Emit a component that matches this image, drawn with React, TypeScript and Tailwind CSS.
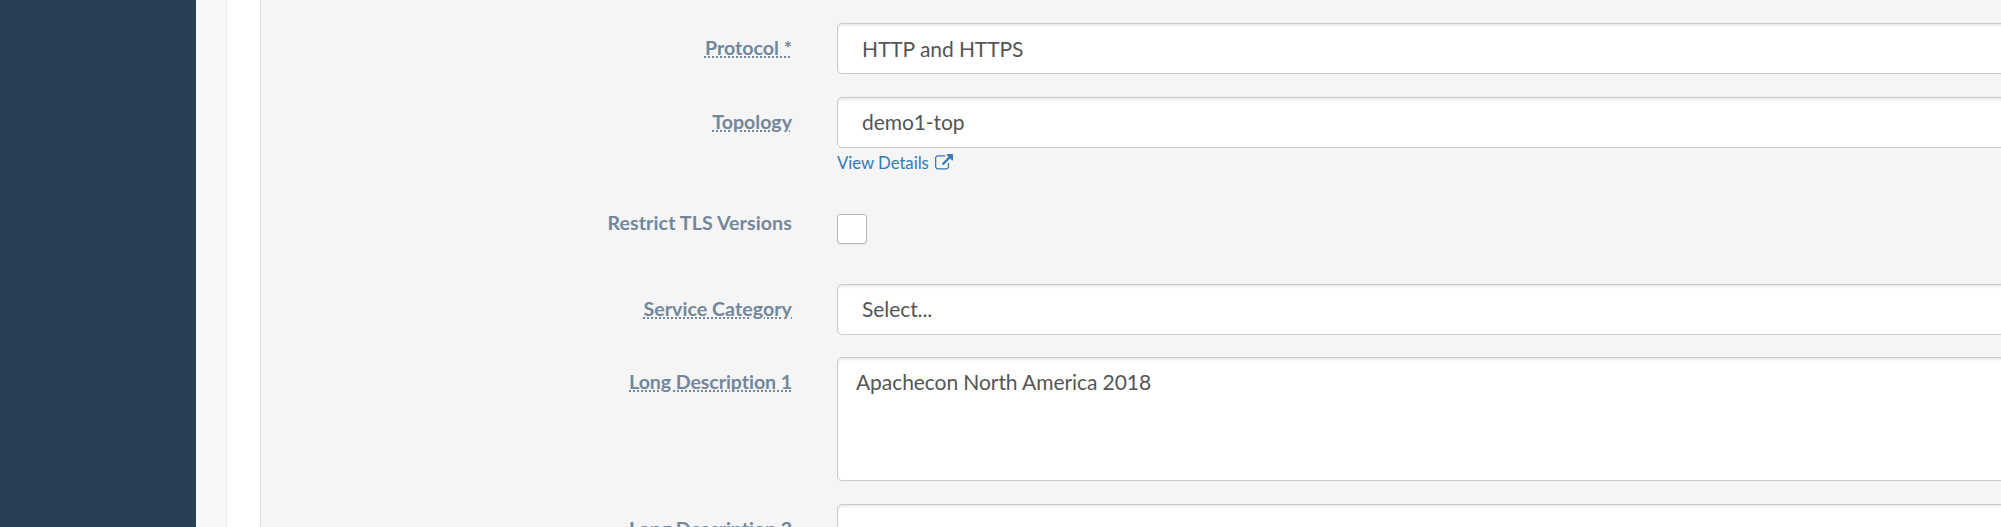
import type { ReactNode } from 'react';

function Row({ label, hint = true, className, labelClass = 'pt-[11px]', children }: {
  label: string; hint?: boolean; className: string; labelClass?: string; children: ReactNode;
}) {
  return (
    <div className={`flex shrink-0 items-start ${className}`}>
      <div className={`w-[531px] shrink-0 text-right text-[19.6px] leading-[28px] font-bold text-[#73879c] [font-variant-ligatures:none] ${labelClass}`}>
        <span className={hint ? 'underline decoration-dotted decoration-2 underline-offset-[1px]' : ''}>{label}</span>
      </div>
      <div className="-mr-2 ml-[45px] min-w-0 flex-1">{children}</div>
    </div>
  );
}

const field = 'w-full rounded-[5px] border border-[#c9c9c9] bg-white text-[21px] tracking-[-0.07px] text-[#555] shadow-[inset_0_2px_2px_rgba(0,0,0,0.075)]';

function Select({ value, className = 'pb-[2px]' }: { value: string; className?: string }) {
  return <div className={`${field} flex h-[51px] items-center pl-[24px] ${className}`}>{value}</div>;
}

export default function App() {
  return (
    <div className="flex h-[527px] w-full overflow-hidden bg-[#f7f7f7] font-['Lato',sans-serif]">
      <aside className="w-[196px] shrink-0 bg-[#2a3f54]" />
      <main className="ml-[30px] flex min-w-0 flex-1 border-l border-[#e6e9ed] bg-white pl-[33px]">
        <form className="flex min-w-0 flex-1 flex-col border-l border-[#ddd] bg-[#f5f5f5] pt-[23px]">
          <Row label="Protocol *" className="h-[74px]"><Select value="HTTP and HTTPS" className="" /></Row>
          <Row label="Topology" className="h-[108px]">
            <Select value="demo1-top" />
            <a className="mt-[2px] flex items-center text-[16.8px] leading-[25px] tracking-[-0.05px] text-[#337ab7]">
              View Details
              <svg className="ml-[6px] h-[18px] w-[18px]" viewBox="0 0 1792 1792" fill="currentColor">
                <path d="M1408 928v320q0 119-84.500 203.500t-203.500 84.500h-832q-119 0-203.500-84.500t-84.500-203.500v-832q0-119 84.500-203.500t203.500-84.500h704q14 0 23 9t9 23v64q0 14-9 23t-23 9h-704q-66 0-113 47t-47 113v832q0 66 47 113t113 47h832q66 0 113-47t47-113v-320q0-14 9-23t23-9h64q14 0 23 9t9 23zm384-864v512q0 26-19 45t-45 19-45-19l-176-176-652 652q-10 10-23 10t-23-10l-114-114q-10-10-10-23t10-23l652-652-176-176q-19-19-19-45t19-45 45-19h512q26 0 45 19t19 45z" />
              </svg>
            </a>
          </Row>
          <Row label="Restrict TLS Versions" hint={false} className="h-[79px]" labelClass="pt-[4px] tracking-[0.1px]">
            <div className="mt-[9px] h-[30px] w-[30px] rounded-[3px] border border-[#bdb6ae] bg-white shadow-[0_1px_1px_rgba(0,0,0,0.05)]" />
          </Row>
          <Row label="Service Category" className="h-[73px]" labelClass="pt-[11px] tracking-[0.05px]"><Select value="Select..." /></Row>
          <Row label="Long Description 1" className="h-[147px]" labelClass="pt-[11px] tracking-[-0.08px]">
            <div className={`${field} h-[124px] pt-[9px] pl-[18px] leading-[30px]`}>Apachecon North America 2018</div>
          </Row>
          <Row label="Long Description 2" className="h-[147px]" labelClass="pt-[11px] tracking-[-0.08px]">
            <div className={`${field} h-[124px]`} />
          </Row>
        </form>
      </main>
    </div>
  );
}
